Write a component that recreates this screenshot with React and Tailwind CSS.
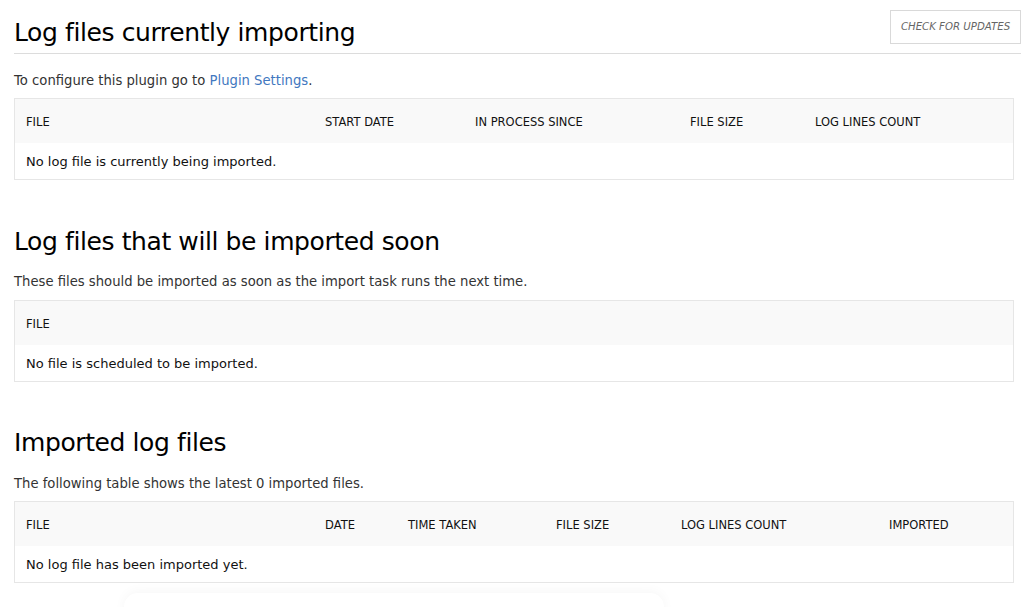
const font = { fontFamily: '"DejaVu Sans", Verdana, sans-serif' };

function DataTable({ columns, empty }) {
  return (
    <div className="mr-[7px] border border-[#e6e6e6]">
      <table className="w-full table-fixed border-collapse">
        <colgroup>
          {columns.map((c, i) => (
            <col key={i} className={c.w} />
          ))}
        </colgroup>
        <thead>
          <tr className="h-[44px] bg-[#f9f9f9]">
            {columns.map((c, i) => (
              <th
                key={i}
                className="px-[11px] pt-[3px] text-left align-middle text-[11.5px] font-normal uppercase text-[#111]"
              >
                {c.label}
              </th>
            ))}
          </tr>
        </thead>
        <tbody>
          <tr className="h-[36px]">
            <td
              colSpan={columns.length}
              className="px-[11px] pt-[2px] align-middle text-[13px] text-[#111]"
            >
              {empty}
            </td>
          </tr>
        </tbody>
      </table>
    </div>
  );
}

export default function App() {
  return (
    <div className="relative min-h-[607px] overflow-hidden bg-white pl-[14px] pr-[9px]" style={font}>
      {/* section 1 */}
      <div className="flex items-end justify-between border-b border-[#dcdcdc] pt-[10px] pb-[5px]">
        <h2 className="text-[25px] leading-[30px] tracking-[-0.4px] text-black">
          Log files currently importing
        </h2>
        <button className="mb-[4px] h-[34px] w-[131px] border border-[#d9d9d9] bg-white text-[10.2px] italic text-[#666]">
          CHECK FOR UPDATES
        </button>
      </div>
      <p className="mt-[18px] mb-[8px] text-[13.2px] leading-[18px] text-[#333]">
        To configure this plugin go to{" "}
        <a href="#" className="text-[#4278c0]">
          Plugin Settings
        </a>
        .
      </p>
      <DataTable
        columns={[
          { label: "File", w: "w-[299px]" },
          { label: "Start Date", w: "w-[150px]" },
          { label: "In Process Since", w: "w-[215px]" },
          { label: "File Size", w: "w-[125px]" },
          { label: "Log Lines Count", w: "" },
        ]}
        empty="No log file is currently being imported."
      />

      {/* section 2 */}
      <h2 className="mt-[47px] text-[25px] leading-[30px] tracking-[-0.4px] text-black">
        Log files that will be imported soon
      </h2>
      <p className="mt-[16px] mb-[9px] text-[13.2px] leading-[18px] text-[#333]">
        These files should be imported as soon as the import task runs the next time.
      </p>
      <DataTable
        columns={[{ label: "File", w: "" }]}
        empty="No file is scheduled to be imported."
      />

      {/* section 3 */}
      <h2 className="mt-[46px] text-[25px] leading-[30px] tracking-[-0.4px] text-black">
        Imported log files
      </h2>
      <p className="mt-[17px] mb-[8px] text-[13.2px] leading-[18px] text-[#333]">
        The following table shows the latest 0 imported files.
      </p>
      <DataTable
        columns={[
          { label: "File", w: "w-[299px]" },
          { label: "Date", w: "w-[83px]" },
          { label: "Time Taken", w: "w-[148px]" },
          { label: "File Size", w: "w-[125px]" },
          { label: "Log Lines Count", w: "w-[208px]" },
          { label: "Imported", w: "" },
        ]}
        empty="No log file has been imported yet."
      />

      {/* faint card peeking at the bottom */}
      <div className="mt-[10px] ml-[110px] h-[40px] w-[540px] rounded-[14px] bg-white shadow-[0_-2px_12px_rgba(0,0,0,0.035)]" />
    </div>
  );
}
